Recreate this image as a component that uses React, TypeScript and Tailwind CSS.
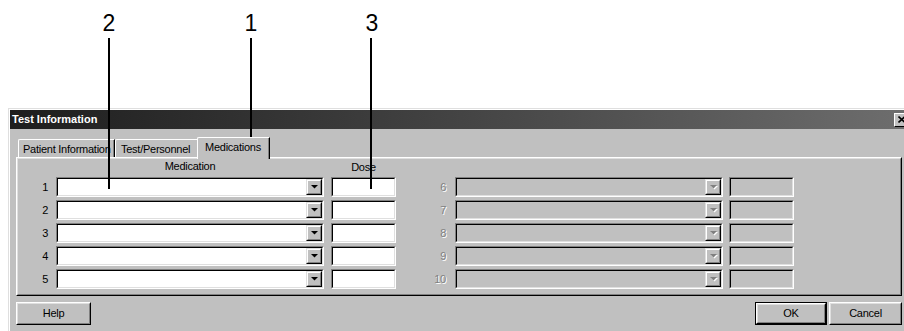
import React from "react";

function Arrow({ disabled }: { disabled?: boolean }) {
  return (
    <svg width="9" height="6" viewBox="0 0 9 6" className="block">
      {disabled && <polygon points="2,2 9,2 5.5,5.5" fill="#ffffff" />}
      <polygon points="1,1 8,1 4.5,4.5" fill={disabled ? "#808080" : "#000000"} />
    </svg>
  );
}

function DropBtn({ disabled }: { disabled?: boolean }) {
  return (
    <div className="w-[16px] h-full border border-t-[#dfdfdf] border-l-[#dfdfdf] border-b-black border-r-black">
      <div className="h-full border border-t-white border-l-white border-b-[#808080] border-r-[#808080] bg-[#c0c0c0] flex items-center justify-center">
        <Arrow disabled={disabled} />
      </div>
    </div>
  );
}

function Sunken({ className, disabled, children }: { className: string; disabled?: boolean; children?: React.ReactNode }) {
  return (
    <div className={`${className} h-[20px] border border-t-[#808080] border-l-[#808080] border-b-white border-r-white`}>
      <div
        className={`h-full border border-t-black border-l-black border-b-[#dfdfdf] border-r-[#dfdfdf] flex justify-end ${
          disabled ? "bg-[#c0c0c0]" : "bg-white"
        }`}
      >
        {children}
      </div>
    </div>
  );
}

function Btn({ className, label, def }: { className: string; label: string; def?: boolean }) {
  const raised = (
    <div className="h-full border border-t-white border-l-white border-b-black border-r-black">
      <div className="h-full border border-t-[#dfdfdf] border-l-[#dfdfdf] border-b-[#808080] border-r-[#808080] flex items-center justify-center text-[11px] leading-none text-black">
        {label}
      </div>
    </div>
  );
  return (
    <div className={`${className} h-[23px] ${def ? "border border-black" : ""}`}>{raised}</div>
  );
}

function RowPair({ a, b }: { a: string; b: string }) {
  return (
    <div className="flex items-center h-[20px]">
      <div className="w-[33px] text-right text-[11px] leading-[20px] pr-[2px] text-black">{a}</div>
      <Sunken className="ml-[6px] w-[268px]">
        <DropBtn />
      </Sunken>
      <Sunken className="ml-[7px] w-[65px]" />
      <div
        className="w-[52px] text-right text-[11px] leading-[20px] pr-[2px] text-[#808080]"
        style={{ textShadow: "1px 1px 0 #ffffff" }}
      >
        {b}
      </div>
      <Sunken className="ml-[7px] w-[268px]" disabled>
        <DropBtn disabled />
      </Sunken>
      <Sunken className="ml-[6px] w-[65px]" disabled />
    </div>
  );
}

export default function App() {
  return (
    <div
      className="relative w-[904px] h-[331px] overflow-hidden bg-white text-black"
      style={{ fontFamily: '"Liberation Sans", Arial, sans-serif' }}
    >
      <div className="pt-[108px] pl-[8px] tracking-[-0.25px]">
        <div className="w-[904px] border-t border-l border-t-[#dfdfdf] border-l-[#dfdfdf]">
          <div className="h-[222px] border-t border-l border-t-white border-l-white bg-[#c0c0c0]">
            {/* title bar */}
            <div className="h-[19px] flex items-center pl-[2px] pr-[2px] bg-gradient-to-r from-[#1e1e1e] to-[#6e6e6e]">
              <div className="text-white font-bold text-[11px] leading-none tracking-normal">Test Information</div>
              <div className="flex-1" />
              <div className="w-[16px] h-[14px] border border-t-white border-l-white border-b-black border-r-black bg-[#c0c0c0] flex items-center justify-center">
                <svg width="8" height="7" viewBox="0 0 8 7">
                  <path d="M0.5 0.5 L7 6.5 M7 0.5 L0.5 6.5" stroke="#000" strokeWidth="1.6" />
                </svg>
              </div>
            </div>
            {/* body */}
            <div className="pl-[6px]">
              {/* tabs */}
              <div className="flex items-end h-[28px] pl-[2px]">
                <div className="w-[97px] h-[18px] border-t border-l border-t-white border-l-white border-r border-r-black rounded-tl-[2px] shadow-[inset_-1px_0_0_#808080] text-[11px] leading-[19px] pl-[4px] whitespace-nowrap overflow-hidden">
                  Patient Information
                </div>
                <div className="w-[84px] h-[18px] border-t border-l border-t-white border-l-white border-r border-r-black rounded-tl-[2px] shadow-[inset_-1px_0_0_#808080] text-[11px] leading-[19px] pl-[5px] whitespace-nowrap">
                  Test/Personnel
                </div>
                <div className="relative z-10 -ml-[2px] -mb-[2px] w-[73px] h-[22px] bg-[#c0c0c0] border-t border-l border-t-white border-l-white border-r border-r-black rounded-tl-[2px] shadow-[inset_-1px_0_0_#808080] text-[11px] leading-[18px] pl-[7px] whitespace-nowrap">
                  Medications
                </div>
              </div>
              {/* panel */}
              <div className="w-[886px] border border-t-white border-l-white border-b-black border-r-black">
                <div className="border border-t-[#dfdfdf] border-l-[#dfdfdf] border-b-[#808080] border-r-[#808080] pb-[5px]">
                  <div className="flex h-[18px] text-[11px] leading-[14px]">
                    <div className="w-[38px]" />
                    <div className="w-[268px] text-center">Medication</div>
                    <div className="ml-[7px] w-[65px] text-center pt-[1px]">Dose</div>
                  </div>
                  <div className="flex flex-col gap-[3px] -ml-[1px]">
                    <RowPair a="1" b="6" />
                    <RowPair a="2" b="7" />
                    <RowPair a="3" b="8" />
                    <RowPair a="4" b="9" />
                    <RowPair a="5" b="10" />
                  </div>
                </div>
              </div>
              {/* buttons */}
              <div className="w-[886px] flex mt-[6px]">
                <Btn className="w-[75px]" label="Help" />
                <div className="flex-1" />
                <Btn className="w-[72px]" label="OK" def />
                <Btn className="ml-[2px] w-[73px]" label="Cancel" />
              </div>
            </div>
          </div>
        </div>
      </div>

      {/* callouts */}
      <div className="absolute left-[98px] top-[12px] w-[22px] text-center text-[23px] leading-none">2</div>
      <div className="absolute left-[240px] top-[12px] w-[22px] text-center text-[23px] leading-none">1</div>
      <div className="absolute left-[361px] top-[12px] w-[22px] text-center text-[23px] leading-none">3</div>
      <div className="absolute left-[108px] top-[38px] w-[2px] h-[151px] bg-black z-20" />
      <div className="absolute left-[250px] top-[38px] w-[2px] h-[99px] bg-black z-20" />
      <div className="absolute left-[370px] top-[38px] w-[2px] h-[151px] bg-black z-20" />
    </div>
  );
}
